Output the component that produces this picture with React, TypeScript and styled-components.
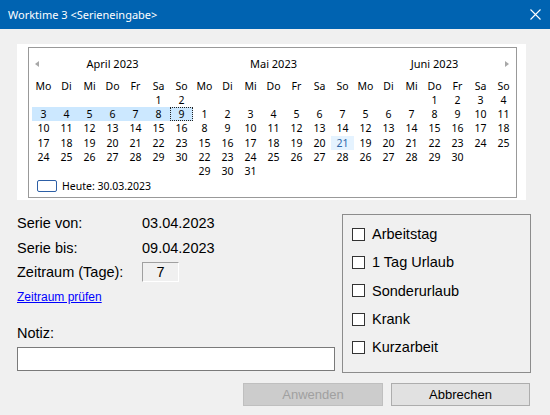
import React from 'react'
import styled, { createGlobalStyle, css } from 'styled-components'

const GlobalStyle = createGlobalStyle`
  *, *::before, *::after { box-sizing: border-box; }
  html, body { margin: 0; padding: 0; }
  body {
    width: 550px;
    height: 415px;
    overflow: hidden;
    background: #f0f0f0;
    font-family: "Liberation Sans", Arial, sans-serif;
  }
`

interface MonthData {
    name: string
    offset: number
    days: number
    prev?: boolean
    next?: boolean
}

const months: MonthData[] = [
    { name: 'April 2023', offset: 5, days: 30, prev: true },
    { name: 'Mai 2023', offset: 7, days: 31 },
    { name: 'Juni 2023', offset: 3, days: 30, next: true },
]

const weekDays = ['Mo', 'Di', 'Mi', 'Do', 'Fr', 'Sa', 'So']
const checkItems = ['Arbeitstag', '1 Tag Urlaub', 'Sonderurlaub', 'Krank', 'Kurzarbeit']

const Window = styled.div`
    width: 550px;
    height: 415px;
    display: flex;
    flex-direction: column;
    background: #f0f0f0;
`
const TitleBar = styled.div`
    height: 29px;
    flex: none;
    background: #0063b1;
    color: #fff;
    display: flex;
    align-items: center;
    justify-content: space-between;
    padding: 0 9px 0 8px;
    font-family: "Noto Sans", sans-serif;
    font-size: 11px;
`
const Content = styled.div`
    display: flex;
    flex-direction: column;
    padding: 15px 0 0 17px;
`
const CalendarPanel = styled.div`
    width: 509px;
    height: 156px;
    background: #fff;
    padding: 3px 0 0 11px;
`
const MonthCal = styled.div`
    width: 489px;
    height: 151px;
    border: 1px solid #999;
    padding-left: 3px;
    font-family: "Noto Sans", sans-serif;
    font-size: 10.5px;
    color: #000;
`
const MonthsRow = styled.div`
    display: flex;
`
const Month = styled.div`
    display: grid;
    grid-template-columns: repeat(7, 23px);
    grid-template-rows: 31px 14px repeat(6, 14.2px);
    align-items: center;
`
const MonthHeader = styled.div`
    grid-column: 1 / -1;
    display: grid;
    grid-template-columns: 16px 1fr 16px;
    align-items: center;
    height: 100%;
`
const MonthTitle = styled.span`
    text-align: center;
    font-size: 11px;
`
const Arrow = styled.span<{ $dir: 'left' | 'right' }>`
    width: 0;
    height: 0;
    border-top: 3.5px solid transparent;
    border-bottom: 3.5px solid transparent;
    ${p => p.$dir === 'left'
        ? css`border-right: 4px solid #a8a8a8; margin-left: 3px;`
        : css`border-left: 4px solid #a8a8a8; margin-left: 6px;`}
`
const DayName = styled.span`
    text-align: center;
    line-height: 14px;
`
const DayCell = styled.span<{ $selected?: boolean; $focus?: boolean; $hot?: boolean }>`
    height: 100%;
    display: flex;
    align-items: center;
    justify-content: center;
    ${p => p.$selected && css`background: #cce8ff;`}
    ${p => p.$focus && css`outline: 1px dotted #222; outline-offset: -1px;`}
    ${p => p.$hot && css`background: #e5f3ff; color: #2f68a8;`}
`
const TodayRow = styled.div`
    display: flex;
    align-items: center;
    gap: 5px;
    height: 14px;
    margin: 1px 0 0 5px;
`
const TodayBox = styled.span`
    width: 20px;
    height: 12px;
    border: 1px solid #2d5fa6;
    border-radius: 2px;
`
const Lower = styled.div`
    display: flex;
    align-items: flex-start;
    gap: 7px;
    margin-top: 11px;
`
const LeftCol = styled.div`
    width: 318px;
    display: flex;
    flex-direction: column;
`
const Fields = styled.div`
    display: grid;
    grid-template-columns: 125px auto;
    grid-auto-rows: 24.5px;
    align-items: center;
    font-size: 14.5px;
    color: #000;
`
const DaysBox = styled.span`
    width: 37px;
    height: 20px;
    border-top: 1px solid #a0a0a0;
    border-left: 1px solid #a0a0a0;
    border-bottom: 1px solid #fff;
    border-right: 1px solid #fff;
    text-align: center;
    line-height: 18px;
`
const Link = styled.a`
    margin-top: 5px;
    font-size: 12px;
    line-height: 14px;
    color: #0000ff;
    text-decoration: underline;
    align-self: flex-start;
`
const NoteLabel = styled.label`
    margin-top: 21px;
    font-size: 14.5px;
    line-height: 17px;
`
const NoteInput = styled.input`
    margin-top: 5px;
    width: 318px;
    height: 24px;
    border: 1px solid #7a7a7a;
    background: #fff;
    outline: none;
`
const GroupBox = styled.div`
    width: 189px;
    height: 159px;
    margin-top: 3px;
    border: 1px solid #8c8c8c;
    padding: 5px 0 0 9px;
    display: flex;
    flex-direction: column;
`
const CheckRow = styled.label`
    height: 28.3px;
    display: flex;
    align-items: center;
    gap: 7px;
    font-size: 14.5px;
    color: #000;
`
const CheckBox = styled.span`
    width: 13px;
    height: 13px;
    border: 1px solid #333;
    background: #fff;
`
const ButtonRow = styled.div`
    display: flex;
    justify-content: flex-end;
    gap: 8px;
    margin-top: 10px;
    padding-right: 20px;
`
const Button = styled.button<{ $disabled?: boolean }>`
    height: 23px;
    width: 139px;
    font-family: "Liberation Sans", Arial, sans-serif;
    font-size: 13px;
    padding: 0;
    border: 1px solid #adadad;
    background: #e1e1e1;
    color: #000;
    ${p => p.$disabled && css`
        width: 140px;
        border-color: #bfbfbf;
        background: #cccccc;
        color: #a0a0a0;
    `}
`

const MonthView = ({ month, index }: { month: MonthData; index: number }) => {
    const cells: (number | null)[] = Array(month.offset).fill(null)
    for (let d = 1; d <= month.days; d++) cells.push(d)
    while (cells.length < 42) cells.push(null)

    return (
        <Month>
            <MonthHeader>
                {month.prev ? <Arrow $dir="left" /> : <span />}
                <MonthTitle>{month.name}</MonthTitle>
                {month.next ? <Arrow $dir="right" /> : <span />}
            </MonthHeader>
            {weekDays.map(w => <DayName key={w}>{w}</DayName>)}
            {cells.map((d, i) => {
                const selected = index === 0 && d !== null && d >= 3 && d <= 9
                return (
                    <DayCell
                        key={i}
                        $selected={selected}
                        $focus={index === 0 && d === 9}
                        $hot={index === 1 && d === 21}
                    >
                        {d ?? ''}
                    </DayCell>
                )
            })}
        </Month>
    )
}

const App = () => {
    return (
        <>
            <GlobalStyle />
            <Window>
                <TitleBar>
                    <span>Worktime 3 &lt;Serieneingabe&gt;</span>
                    <svg width="11" height="11" viewBox="0 0 11 11">
                        <path d="M0.5 0.5 L10.5 10.5 M10.5 0.5 L0.5 10.5" stroke="#fff" strokeWidth="1.1" />
                    </svg>
                </TitleBar>
                <Content>
                    <CalendarPanel>
                        <MonthCal>
                            <MonthsRow>
                                {months.map((m, i) => <MonthView key={m.name} month={m} index={i} />)}
                            </MonthsRow>
                            <TodayRow>
                                <TodayBox />
                                <span>Heute: 30.03.2023</span>
                            </TodayRow>
                        </MonthCal>
                    </CalendarPanel>
                    <Lower>
                        <LeftCol>
                            <Fields>
                                <span>Serie von:</span>
                                <span>03.04.2023</span>
                                <span>Serie bis:</span>
                                <span>09.04.2023</span>
                                <span>Zeitraum (Tage):</span>
                                <DaysBox>7</DaysBox>
                            </Fields>
                            <Link href="#">Zeitraum prüfen</Link>
                            <NoteLabel>Notiz:</NoteLabel>
                            <NoteInput type="text" />
                        </LeftCol>
                        <GroupBox>
                            {checkItems.map(item => (
                                <CheckRow key={item}>
                                    <CheckBox />
                                    <span>{item}</span>
                                </CheckRow>
                            ))}
                        </GroupBox>
                    </Lower>
                    <ButtonRow>
                        <Button $disabled>Anwenden</Button>
                        <Button>Abbrechen</Button>
                    </ButtonRow>
                </Content>
            </Window>
        </>
    )
}

export default App
